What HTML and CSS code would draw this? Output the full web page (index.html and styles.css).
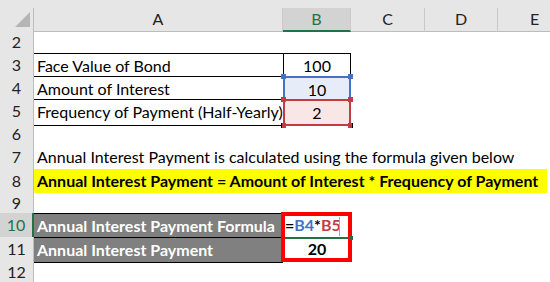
FILE: index.html
```html
<!DOCTYPE html>
<html>
<head>
<meta charset="utf-8">
<link rel="stylesheet" href="styles.css">
</head>
<body>
<div class="sheet">
  <div class="row colheads">
    <div class="corner"><svg width="15" height="15" viewBox="0 0 15 15"><polygon points="15,0 15,15 0,15" fill="#b5b5b5"/></svg></div>
    <div class="ch">A</div>
    <div class="ch sel">B</div>
    <div class="ch">C</div>
    <div class="ch">D</div>
    <div class="ch">E</div>
  </div>

  <div class="row h22"><div class="rh">2</div><div class="c"></div><div class="c"></div><div class="c"></div><div class="c"></div><div class="c"></div></div>

  <div class="row h23"><div class="rh">3</div><div class="c bt">Face Value of Bond</div><div class="c num bt bl br">100</div><div class="c"></div><div class="c"></div><div class="c"></div></div>

  <div class="row h23"><div class="rh">4</div><div class="c bt">Amount of Interest</div><div class="c num ref blue">10<span class="sq tl"></span><span class="sq tr"></span></div><div class="c"></div><div class="c"></div><div class="c"></div></div>

  <div class="row h23"><div class="rh">5</div><div class="c bt bb">Frequency of Payment (Half-Yearly)</div><div class="c num ref red">2<span class="sq tl"></span><span class="sq tr"></span><span class="sq bl"></span><span class="sq br"></span></div><div class="c"></div><div class="c"></div><div class="c"></div></div>

  <div class="row h23"><div class="rh">6</div><div class="c"></div><div class="c"></div><div class="c"></div><div class="c"></div><div class="c"></div></div>

  <div class="row h24"><div class="rh">7</div><div class="c">Annual Interest Payment is calculated using the formula given below</div></div>

  <div class="row h23"><div class="rh">8</div><div class="c bold yellow">Annual Interest Payment = Amount of Interest * Frequency of Payment</div></div>

  <div class="row h21"><div class="rh">9</div><div class="c"></div><div class="c"></div><div class="c"></div><div class="c"></div><div class="c"></div></div>

  <div class="row h24"><div class="rh sel">10</div><div class="c bold gray bt">Annual Interest Payment Formula</div><div class="c bold edit"><span class="op">=</span><span class="rb">B4</span><span class="op">*</span><span class="rr">B5</span><span class="caret"></span><span class="act"></span><span class="annot"></span><span class="fh"></span></div><div class="c"></div><div class="c"></div><div class="c"></div></div>

  <div class="row h24"><div class="rh">11</div><div class="c bold gray bt bb">Annual Interest Payment</div><div class="c bold num">20</div><div class="c"></div><div class="c"></div><div class="c"></div></div>

  <div class="row h22"><div class="rh">12</div><div class="c"></div><div class="c"></div><div class="c"></div><div class="c"></div><div class="c"></div></div>
</div>
</body>
</html>
```

FILE: styles.css
```css
* { box-sizing: border-box; }
html, body { margin: 0; padding: 0; background: #fff; }
body {
  width: 550px;
  height: 282px;
  overflow: hidden;
  font-family: Lato, "Liberation Sans", sans-serif;
  font-size: 16px;
  color: #000;
}
.sheet { display: flex; flex-direction: column; width: 572px; }
.row {
  display: grid;
  grid-template-columns: 34px 249px 68px 74px 73px 74px;
  flex: none;
}
.h21 { height: 21px; line-height: 21px; }
.h22 { height: 22px; line-height: 22px; }
.h23 { height: 23px; line-height: 23px; }
.h24 { height: 24px; line-height: 24px; }

.colheads { height: 31px; padding-top: 8px; background: #e6e6e6; line-height: 22px; }
.corner {
  display: flex; justify-content: flex-end; align-items: center;
  padding-right: 3px;
  border-right: 1px solid #bdbdbd;
  border-bottom: 1px solid #bdbdbd;
}
.ch {
  text-align: center;
  color: #222;
  border-right: 1px solid #c9c9c9;
  border-bottom: 1px solid #bdbdbd;
}
.ch.sel { background: #d3d3d3; color: #217346; border-bottom: 2px solid #217346; }

.rh {
  background: #e6e6e6;
  color: #222;
  text-align: center;
  border-right: 1px solid #bdbdbd;
  border-bottom: 1px solid #d6d6d6;
}
.rh.sel { background: #d3d3d3; color: #217346; border-right: 2px solid #217346; }

.c { padding: 0 3px; white-space: nowrap; }
.num { text-align: center; }
.bold { font-weight: 700; }
.bt { border-top: 1px solid #000; }
.bb { border-bottom: 1px solid #000; }
.bl { border-left: 1px solid #000; }
.br { border-right: 1px solid #000; }

.yellow { grid-column: 2 / -1; background: #ffff00; margin-right: 25px; }
.gray { background: #808080; color: #fff; }

.ref { position: relative; border: 2px solid; }
.blue { background: #e6edf8; border-color: #4472c4; }
.red { background: #f9e6e7; border-color: #c43b45; }
.sq { position: absolute; width: 5px; height: 5px; }
.blue .sq { background: #4472c4; }
.red .sq { background: #c43b45; }
.tl { top: -4px; left: -4px; }
.tr { top: -4px; right: -4px; }
.bl.sq { bottom: -4px; left: -4px; }
.br.sq { bottom: -4px; right: -4px; }

.edit { position: relative; padding-left: 2px; }
.rb { color: #4472c4; }
.rr { color: #c43b45; }
.caret { position: absolute; left: 56px; top: 4px; width: 1px; height: 19px; background: #a6a6a6; }
.act { position: absolute; left: 1px; top: 24px; width: 66px; height: 2px; background: #217346; }
.annot { position: absolute; left: -2px; top: -1px; width: 71px; height: 50px; border: 4px solid #ff0000; }
.fh { position: absolute; left: 66px; top: 23px; width: 4px; height: 4px; background: #217346; }
```
